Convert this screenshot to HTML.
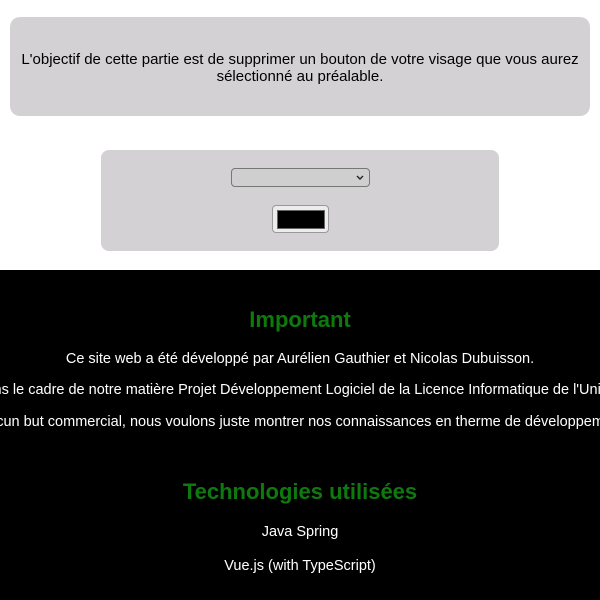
<!DOCTYPE html>
<html><head><meta charset="utf-8"><style>
body{margin:0;width:600px;height:600px;overflow:hidden;background:#fff;font-family:"Liberation Sans",Arial,sans-serif;position:relative}
.p1{position:absolute;left:10px;top:17px;width:580px;height:99px;background:#d3d1d3;border-radius:10px;text-align:center;font-size:15px;line-height:17px;color:#000}
.p1 div{position:absolute;top:34px;width:100%}
.p2{position:absolute;left:101px;top:150px;width:398px;height:101px;background:#d3d1d3;border-radius:8px}
.sel{position:absolute;left:130px;top:18px;width:137px;height:17px;border:1px solid #777;border-radius:4px;background:#d0cfd0}
.sel svg{position:absolute;right:5px;top:6px}
.btn{position:absolute;left:171px;top:55px;width:55px;height:26px;border:1px solid #999;border-radius:4px;background:#ececec}
.btn i{position:absolute;left:4px;top:4px;width:46px;height:17px;background:#000;border:1px solid #666}
.dark{position:absolute;left:0;top:270px;width:600px;height:330px;background:#000;color:#fff;overflow:hidden}
.t{position:absolute;white-space:nowrap;font-size:14.5px;line-height:18px}
.c{left:0;width:600px;text-align:center}
h2{position:absolute;margin:0;left:0;width:600px;text-align:center;color:#0e7a0e;font-size:22px;line-height:26px}
</style></head><body>
<div class="p1"><div>L'objectif de cette partie est de supprimer un bouton de votre visage que vous aurez<br>sélectionné au préalable.</div></div>
<div class="p2"><div class="sel"><svg width="8" height="5" viewBox="0 0 8 5"><path d="M1 1l3 3 3-3" stroke="#222" stroke-width="1.4" fill="none"/></svg></div><div class="btn"><i></i></div></div>
<div class="dark">
<h2 style="top:37px">Important</h2>
<div class="t c" style="top:80px">Ce site web a été développé par Aurélien Gauthier et Nicolas Dubuisson.</div>
<div class="t" style="top:111px;left:-25px">Dans le cadre de notre matière Projet Développement Logiciel de la Licence Informatique de l'Université du Littoral Côte d'Opale.</div>
<div class="t" style="top:143px;left:-92px">Ce site n'a aucun but commercial, nous voulons juste montrer nos connaissances en therme de développement web.</div>
<h2 style="top:209px">Technologies utilisées</h2>
<div class="t c" style="top:253px">Java Spring</div>
<div class="t c" style="top:287px">Vue.js (with TypeScript)</div>
</div>
</body></html>
